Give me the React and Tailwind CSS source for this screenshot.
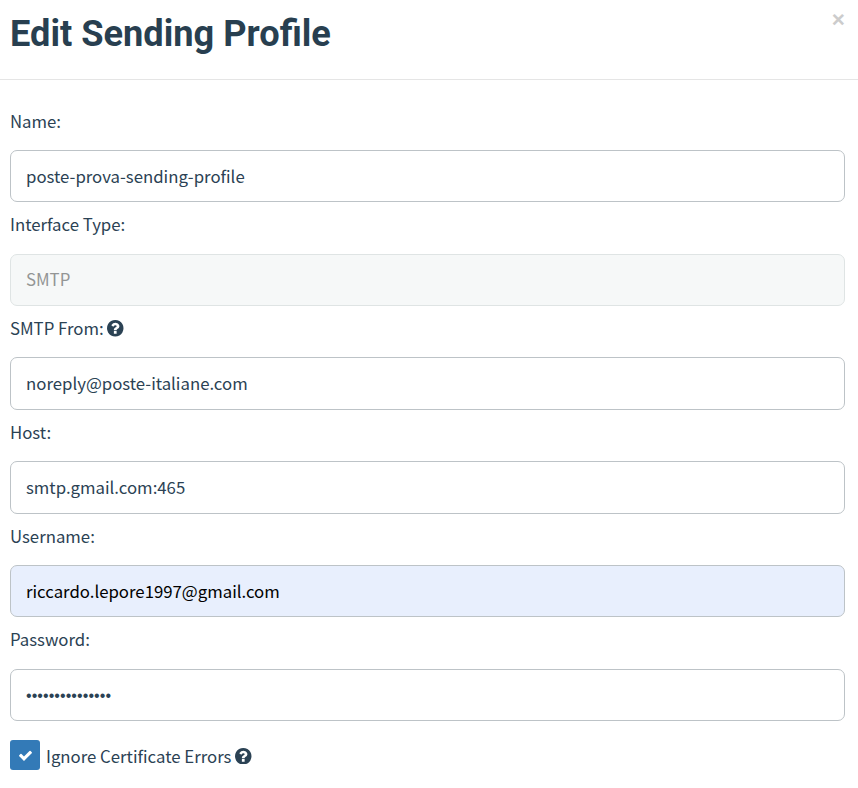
function QuestionIcon() {
  return (
    <svg viewBox="128 128 1536 1536" className="h-[16.5px] w-[16.5px] shrink-0" fill="currentColor" aria-hidden="true">
      <path d="M1024 1376v-192q0-14-9-23t-23-9h-192q-14 0-23 9t-9 23v192q0 14 9 23t23 9h192q14 0 23-9t9-23zm256-672q0-88-55.5-163t-138.5-116-170-41q-243 0-371 213-15 24 8 42l132 100q7 6 19 6 16 0 25-12 53-68 86-92 34-24 86-24 48 0 85.5 26t37.5 59q0 38-20 61t-68 45q-63 28-115.5 86.5t-52.5 125.5v36q0 14 9 23t23 9h192q14 0 23-9t9-23q0-19 21.5-49.5t54.5-49.5q32-18 49-28.5t46-35 44.5-48 28-60.5 12.5-81zm384 192q0 209-103 385.5t-279.5 279.5-385.5 103-385.5-103-279.5-279.5-103-385.5 103-385.5 279.5-279.5 385.5-103 385.5 103 279.5 279.5 103 385.5z" />
    </svg>
  );
}

function CheckIcon() {
  return (
    <svg viewBox="0 0 1792 1792" className="mt-[2px] h-[15px] w-[15px]" fill="currentColor" aria-hidden="true">
      <path d="M1671 566q0 40-28 68l-724 724-136 136q-28 28-68 28t-68-28l-136-136-362-362q-28-28-28-68t28-68l136-136q28-28 68-28t68 28l294 295 656-657q28-28 68-28t68 28l136 136q28 28 28 68z" />
    </svg>
  );
}

const fields = [
  { label: "Name:", leading: "leading-[26px]", value: "poste-prova-sending-profile", style: "border-[#bdc3c7] bg-white" },
  { label: "Interface Type:", leading: "leading-[25.4px]", value: "SMTP", style: "border-[#dfe4e4] bg-[#f6f8f8] text-[#939595]" },
  { label: "SMTP From:", leading: "leading-[26px]", value: "noreply@poste-italiane.com", style: "border-[#bdc3c7] bg-white", help: true },
  { label: "Host:", leading: "leading-[26px]", value: "smtp.gmail.com:465", style: "border-[#bdc3c7] bg-white" },
  { label: "Username:", leading: "leading-[26px]", value: "riccardo.lepore1997@gmail.com", style: "border-[#bdc3c7] bg-[#e8effd] text-black" },
  { label: "Password:", leading: "leading-[25.4px]", value: "•••••••••••••••", style: "border-[#bdc3c7] bg-white", secret: true },
];

function Field({ label, leading, value, style, help, secret }) {
  return (
    <div className="h-[103.78px]">
      <div className={`flex h-[42px] items-start gap-[3.6px] ${leading}`}>
        <span>{label}</span>
        {help && <span className="flex h-[26px] items-center"><QuestionIcon /></span>}
      </div>
      <div className={`flex h-[52.4px] items-center rounded-[7px] border pl-[15px] ${style}`}>
        <span className={secret ? "pt-0.5 font-['Liberation_Sans'] text-[16px] tracking-[0.07px]" : "leading-[25px]"}>{value}</span>
      </div>
    </div>
  );
}

export default function App() {
  return (
    <div className="h-[788px] w-full overflow-hidden bg-white font-['Noto_Sans_CJK_SC',sans-serif] text-[16.77px] text-[#2b4254]">
      <header className="flex h-20 items-start justify-between border-b border-[#e5e5e5] pl-[10px] pr-[13px]">
        <h1 className="pt-[13px] font-[Roboto,sans-serif] text-[36.2px] leading-[42px] font-bold text-[#283f50]">
          Edit Sending Profile
        </h1>
        <button className="mt-[10px] font-['Liberation_Sans'] text-[22.5px] leading-[20px] font-bold text-[#cccccc]">×</button>
      </header>
      <main className="pr-[13px] pl-[10px] pt-[27.9px]">
        {fields.map((field) => (
          <Field key={field.label} {...field} />
        ))}
        <div className="mt-[9.4px] flex items-center">
          <span className="flex h-[30px] w-[30px] items-center justify-center rounded-[3px] bg-[#337ab7] text-white">
            <CheckIcon />
          </span>
          <span className="ml-[6px] pt-[3px]">Ignore Certificate Errors</span>
          <span className="ml-1 pt-0.5"><QuestionIcon /></span>
        </div>
      </main>
    </div>
  );
}
